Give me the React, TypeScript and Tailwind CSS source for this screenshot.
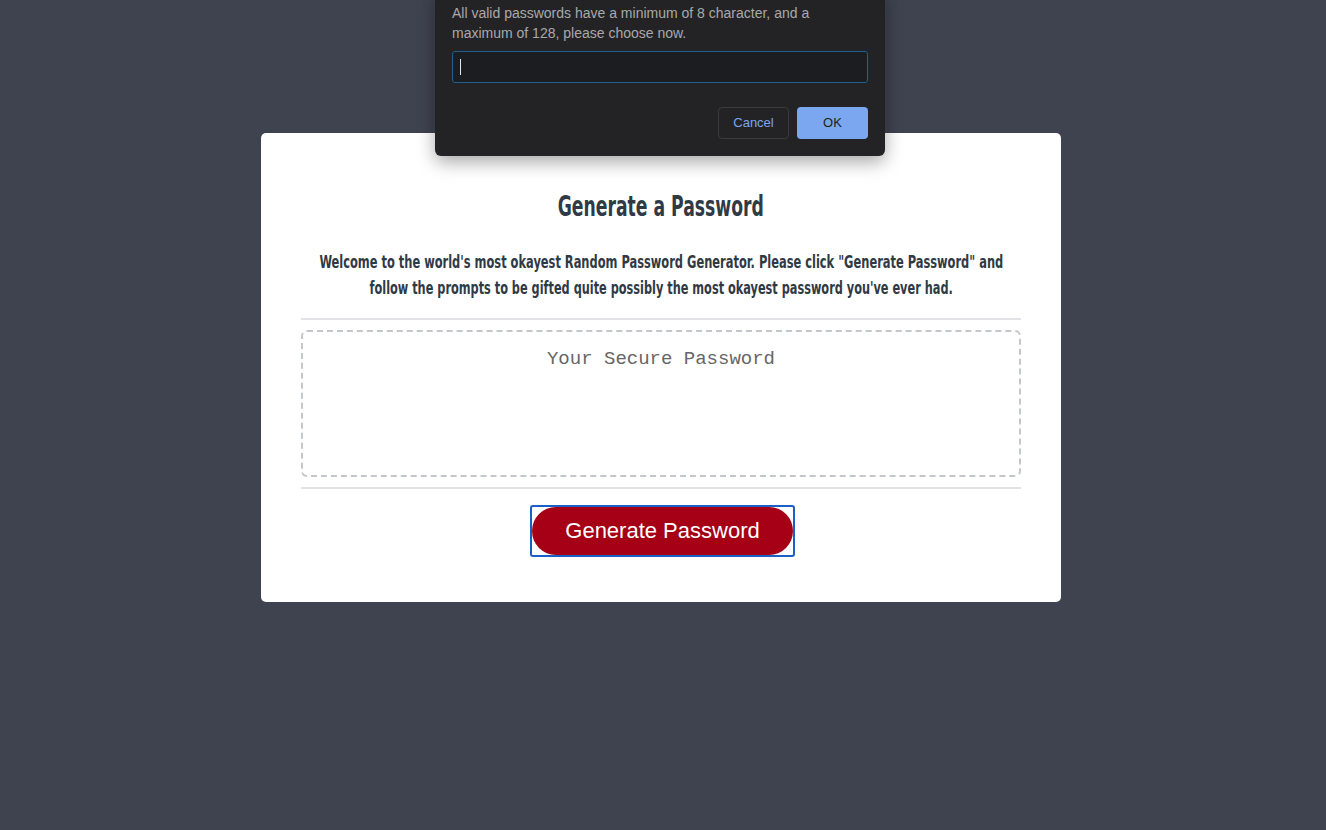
import React from "react";

export default function App() {
  const oswald = { fontFamily: '"DejaVu Sans Condensed", "DejaVu Sans", sans-serif' };
  return (
    <div className="relative min-h-[830px] w-full bg-[#3f4350] overflow-hidden">
      {/* Card */}
      <div className="pt-[133px] flex justify-center pr-[4px]">
        <div className="w-[800px] h-[469px] bg-white rounded-[5px] px-10 pt-[46px]">
          <div className="flex justify-center h-[56px] items-center">
            <h2
              className="whitespace-nowrap inline-block scale-x-[0.684] text-[28px] leading-[56px] font-bold text-[#2f3a45]"
              style={oswald}
            >
              Generate a Password
            </h2>
          </div>
          <div
            className="mt-[14px] flex flex-col items-center text-[18px] leading-[26px] font-bold text-[#2f3a45]"
            style={oswald}
          >
            <span className="whitespace-nowrap inline-block scale-x-[0.706]">
              Welcome to the world's most okayest Random Password Generator. Please click "Generate Password" and
            </span>
            <span className="whitespace-nowrap inline-block scale-x-[0.699]">
              follow the prompts to be gifted quite possibly the most okayest password you've ever had.
            </span>
          </div>
          <div className="mt-[17px] h-[2px] bg-[#e1e3e6]" />
          <div className="mt-[10px] h-[147px] border-2 border-dashed border-[#c3c6ca] rounded-[6px] flex justify-center pt-[15px]">
            <span
              className="text-[19px] leading-[24px] text-[#666666]"
              style={{ fontFamily: '"Liberation Mono", "Courier New", monospace' }}
            >
              Your Secure Password
            </span>
          </div>
          <div className="mt-[10px] h-[2px] bg-[#e1e3e6]" />
          <div className="mt-[16px] flex justify-center pl-[3px]">
            <div className="w-[265px] h-[52px] border-2 border-[#1a5fc4] rounded-[3px] flex">
              <button
                className="flex-1 rounded-full bg-[#a50016] text-white text-[22px] leading-[48px]"
                style={{ fontFamily: '"Liberation Sans", Arial, sans-serif' }}
              >
                Generate Password
              </button>
            </div>
          </div>
        </div>
      </div>

      {/* Prompt dialog */}
      <div
        className="absolute left-[435px] top-[-10px] w-[450px] h-[166px] bg-[#232326] rounded-b-[6px] shadow-[0_6px_18px_rgba(0,0,0,0.35)] px-[17px] pt-[13px]"
        style={{ fontFamily: '"Liberation Sans", Arial, sans-serif' }}
      >
        <p className="w-[380px] text-[14px] leading-[20px] text-[#a9a9ab]">
          All valid passwords have a minimum of 8 character, and a maximum of 128, please choose now.
        </p>
        <div className="mt-[8px] h-[32px] w-[416px] rounded-[3px] border border-[#1f5f8f] bg-[#1c1d20] flex items-center pl-[7px]">
          <div className="w-px h-[16px] bg-[#e8e8e8]" />
        </div>
        <div className="mt-[24px] flex justify-end gap-[8px]">
          <button className="w-[71px] h-[32px] rounded-[4px] border border-[#3b3b3e] bg-[#232326] text-[13px] text-[#7aa7f0]">
            Cancel
          </button>
          <button className="w-[71px] h-[32px] rounded-[4px] bg-[#7ba7f1] text-[13px] text-[#1e1e22]">
            OK
          </button>
        </div>
      </div>
    </div>
  );
}
